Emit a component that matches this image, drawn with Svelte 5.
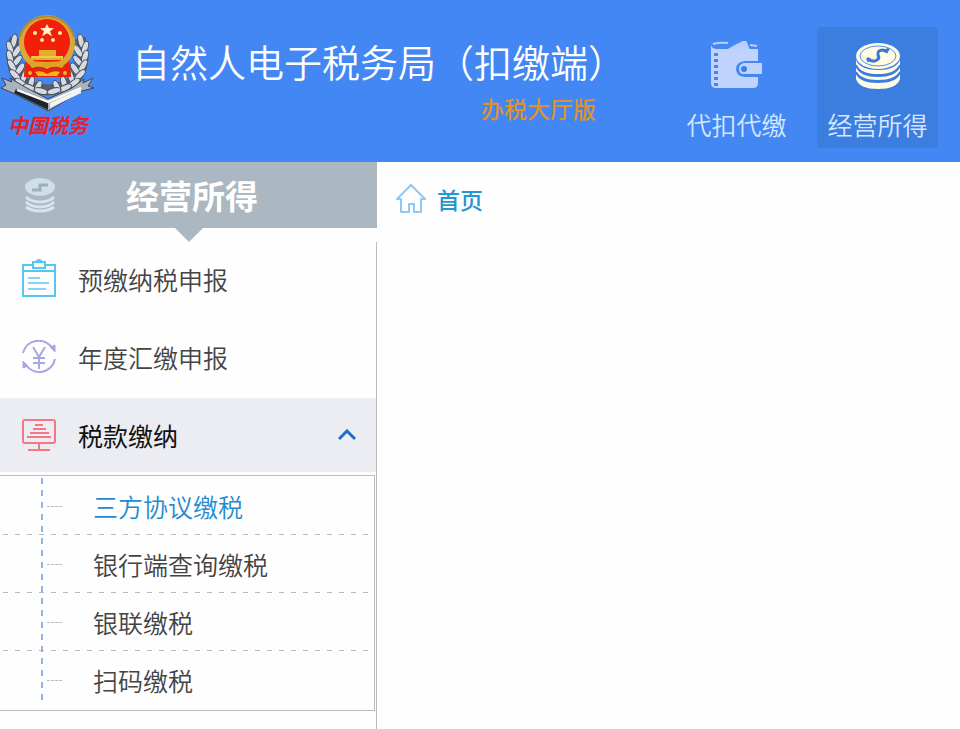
<script lang="ts">
  const title = '自然人电子税务局（扣缴端）';

  const modules = [
    { id: 'withhold', label: '代扣代缴' },
    { id: 'business', label: '经营所得' },
  ];

  const menu = [
    { id: 'prepay', label: '预缴纳税申报' },
    { id: 'annual', label: '年度汇缴申报' },
    { id: 'pay', label: '税款缴纳' },
  ];

  const payLinks = ['三方协议缴税', '银行端查询缴税', '银联缴税', '扫码缴税'];

  // Ears of the wreath, mirrored for the right side.
  const leaves = [
    [14, 41, 12], [10, 48, -18], [17, 51, 35], [10, 57, -15], [17, 61, 40],
    [12, 66, -30], [20, 69, 35], [15, 75, -45], [24, 77, 20], [21, 83, -55],
    [31, 83, 15], [30, 88, -65], [38, 87, 25], [41, 91, -75],
  ];

  let activeModule = $state('business');
  let activeLink = $state('三方协议缴税');
  let payOpen = $state(true);
</script>

<header>
  <div class="logo">
    <svg width="96" height="112" viewBox="0 0 96 112" aria-hidden="true">
      <defs>
        <g id="wreath">
          <path d="M15 38q-8 28 6 42 10 9 27 10" fill="none" stroke="#55606e" stroke-width="11" />
          {#each leaves as [x, y, angle]}
            <ellipse cx={x} cy={y} rx="3" ry="7" transform="rotate({angle} {x} {y})" fill="#d5dbe1" stroke="#46505d" stroke-width="1" />
          {/each}
        </g>
      </defs>
      <path d="M26 74h42l4 12-24 8-24-8z" fill="#4387f4" />
      <use href="#wreath" />
      <use href="#wreath" transform="translate(95 0) scale(-1 1)" />
      <path d="M2 78l10 4-2-4 15 9 23 12 24-11 12-9-1 4 10-5-5 8 6 2-12 3-34 20-33-17-14-6 5-3z" fill="#aab3bb" stroke="#3d4651" stroke-width="1" />
      <path d="M14 93l34 17v-7L16 89z" fill="#1f252d" />
      <path d="M50 103l31-14v4l-31 15z" fill="#f3f5f5" />
      <path d="M17 90l31 12 33-14" fill="none" stroke="#fff" stroke-width="2" />
      <path d="M26 58h43l2 19H24z" fill="#e5230f" />
      <circle cx="47" cy="43" r="28" fill="#d6a938" />
      <path d="M20 37a28 28 0 0 1 54 0" fill="none" stroke="#b9892f" stroke-width="2" />
      <path d="M25 64h45l1 13H24z" fill="#e5230f" />
      <circle cx="47" cy="42" r="23" fill="#f21f0b" />
      <path d="M47 24l2 4 5 .2-4 3 2 5-5-3-5 3 2-5-4-3 5-.2z" fill="#fff2c4" />
      <g fill="#ffe4a0">
        <circle cx="35" cy="33" r="2" />
        <circle cx="60" cy="33" r="2" />
        <circle cx="42" cy="40" r="2" />
        <circle cx="53" cy="40" r="2" />
      </g>
      <path d="M39 50h17v6h7v4H31v-4h8z" fill="#e0b02c" />
      <path d="M26 60q20 4 42 0l-6 8q-9-3-15 1-6-4-15-1z" fill="#dda527" />
      <path d="M32 57h31" stroke="#ffe46a" stroke-width="1" />
      <path d="M35 72q7-2 12 2 6-4 13-2l-3 4H38z" fill="#efb51b" />
      <circle cx="30" cy="73" r="2" fill="#efb51b" />
      <circle cx="65" cy="73" r="2" fill="#efb51b" />
    </svg>
    <span class="logo-text">中国税务</span>
  </div>
  <div class="brand">
    <h1>{title}</h1>
    <span class="edition">办税大厅版</span>
  </div>
  <nav class="modules">
    {#each modules as item}
      <button class:active={activeModule === item.id} onclick={() => (activeModule = item.id)}>
        {#if item.id === 'withhold'}
          <svg width="52" height="50" viewBox="0 0 52 50" aria-hidden="true">
            <path d="M2 3Q8 1 17 2M39 4l7 1" fill="none" stroke="#b9d0ff" stroke-width="2" />
            <path d="M15 9Q23 4 32 0l3-1 2 5 2 5z" fill="#b9d0ff" />
            <path d="M0 4q1 4 6 4h41v12H34q-9 1-9 8t9 8h13v6q0 5-5 5H5q-5 0-5-5z" fill="#c0d3ff" />
            <path d="M33 22h18v11H33q-5 0-5-5t5-6z" fill="#c0d3ff" />
            <circle cx="33" cy="28" r="3" fill="#397fe8" />
            <path d="M5 12v33" stroke="#4685e9" stroke-width="4" stroke-dasharray="3 3" />
          </svg>
        {:else}
          <svg width="46" height="50" viewBox="0 0 46 50" aria-hidden="true">
            <g fill="#fffbe5">
              <path d="M1 33q4 9 22 9t22-9v5q-3 10-22 10T1 38z" />
              <path d="M1 26q4 10 22 10t22-10v5q-4 9-22 9T1 31z" />
              <path d="M1 19q4 10 22 10t22-10v5q-4 10-22 10T1 24z" />
              <ellipse cx="23" cy="15" rx="22" ry="13" />
            </g>
            <ellipse cx="23" cy="15" rx="18" ry="10" fill="none" stroke="#5790e4" stroke-width="1" />
            <path d="M12 17q5 5 10 2 3-2 1-5-1-5 5-5l5 2M12 20l4-2M30 10l4-2" fill="none" stroke="#3979d5" stroke-width="3" />
            <path d="M1 24q4 10 22 10t22-10M1 31q4 9 22 9t22-9" fill="none" stroke="#3b7de0" stroke-width="2" />
          </svg>
        {/if}
        <span>{item.label}</span>
      </button>
    {/each}
  </nav>
</header>

<div class="layout">
  <aside>
    <div class="side-title">
      <svg width="32" height="36" viewBox="0 0 32 36" aria-hidden="true">
        <g fill="none" stroke="#d3e5f0" stroke-width="3">
          <path d="M2 20q5 5 14 5t14-5" />
          <path d="M2 25q5 5 14 5t14-5" />
          <path d="M2 30q5 4 14 4t14-4" />
        </g>
        <ellipse cx="16" cy="10" rx="15" ry="9" fill="#cfdee7" />
        <path d="M8 13h8V8h8" fill="none" stroke="#9cafb9" stroke-width="3" />
      </svg>
      <h2>经营所得</h2>
    </div>
    <nav class="menu">
      {#each menu as item}
        {#if item.id === 'pay'}
          <button class="menu-item open" aria-expanded={payOpen} onclick={() => (payOpen = !payOpen)}>
            <svg width="34" height="34" viewBox="0 0 34 34" aria-hidden="true" fill="none" stroke="#f47883" stroke-width="2">
              <rect x="1" y="2" width="32" height="23" rx="2" />
              <path d="M13 7h8M11 11h13M8 15h19M5 19h24M17 25v7M6 32h22" />
            </svg>
            <span>{item.label}</span>
            <svg class="arrow" class:closed={!payOpen} width="18" height="12" viewBox="0 0 18 12" aria-hidden="true">
              <path d="M1 10l8-8 8 8" fill="none" stroke="#216fc4" stroke-width="3" />
            </svg>
          </button>
        {:else}
          <button class="menu-item">
            {#if item.id === 'prepay'}
              <svg width="34" height="40" viewBox="0 0 34 40" aria-hidden="true" fill="none" stroke="#55c5f4" stroke-width="2">
                <path d="M10 6H1v31h32V6h-9M1 12h32" />
                <path d="M11 9V3h12v6zM14 3q3-4 6 0" fill="#fff" />
                <path d="M6 19h12M6 24h21M6 30h18" stroke="#83d5f8" />
              </svg>
            {:else}
              <svg width="34" height="34" viewBox="0 0 34 34" aria-hidden="true" fill="none" stroke="#aaa6e6" stroke-width="2">
                <path d="M1 13a16 16 0 0 1 29-5M33 19a16 16 0 0 1-29 6" />
                <path d="M33 5v7l-5-5zM1 28v-7l5 5z" fill="#aaa6e6" stroke-width="1" />
                <path d="M11 7l6 10 6-10M17 16v13M11 18h12M11 23h12" />
              </svg>
            {/if}
            <span>{item.label}</span>
          </button>
        {/if}
      {/each}
      {#if payOpen}
        <ul>
          {#each payLinks as link}
            <li>
              <a href="#pay" class:active={activeLink === link} onclick={() => (activeLink = link)}>{link}</a>
            </li>
          {/each}
        </ul>
      {/if}
    </nav>
  </aside>
  <main>
    <a class="crumb" href="#home">
      <svg width="30" height="30" viewBox="0 0 30 30" aria-hidden="true">
        <path d="M5 15H1L15 1l14 14h-4v13h-7v-8h-5v8H5z" fill="none" stroke="#8fc8f7" stroke-width="2" stroke-linejoin="round" />
      </svg>
      <span>首页</span>
    </a>
  </main>
</div>

<style>
  :global(body) {
    margin: 0;
    background: #fefefe;
    font-family: "Noto Sans CJK SC", sans-serif;
  }

  :global(#app) {
    display: flex;
    flex-direction: column;
    min-height: 100vh;
  }

  button {
    border: 0;
    background: none;
    font-family: inherit;
    cursor: pointer;
  }

  a {
    text-decoration: none;
  }

  svg {
    display: block;
    flex-shrink: 0;
  }

  header {
    display: flex;
    box-sizing: border-box;
    height: 162px;
    background: #4387f4;
  }

  .logo {
    display: flex;
    flex-direction: column;
    align-items: center;
    width: 96px;
  }

  .logo-text {
    color: #e8202c;
    font-size: 20px;
    font-style: italic;
    font-weight: 700;
    line-height: 26px;
  }

  .brand {
    display: flex;
    flex-direction: column;
    margin: 33px 0 0 36px;
    white-space: nowrap;
  }

  h1 {
    margin: 0;
    color: #fff;
    font-size: 38px;
    font-weight: 350;
    line-height: 56px;
  }

  .edition {
    align-self: flex-end;
    margin-right: 30px;
    color: #dc922d;
    font-size: 23px;
    font-weight: 500;
    line-height: 38px;
  }

  .modules {
    display: flex;
    gap: 20px;
    margin: 27px 22px 0 auto;
  }

  .modules button {
    display: flex;
    flex-direction: column;
    align-items: center;
    width: 121px;
    height: 121px;
    padding: 14px 0 0;
    border-radius: 4px;
    color: #d5e7ff;
    font-size: 25px;
    font-weight: 350;
    line-height: 36px;
    white-space: nowrap;
  }

  .modules button span {
    margin-top: 15px;
  }

  .modules .active {
    background: #3c7de0;
  }

  .layout {
    display: flex;
    flex: 1;
  }

  aside {
    display: flex;
    flex-direction: column;
    flex-shrink: 0;
    width: 377px;
  }

  .side-title {
    position: relative;
    display: flex;
    align-items: center;
    height: 66px;
    padding-left: 24px;
    background: #abb8c1;
  }

  .side-title::after {
    content: '';
    position: absolute;
    top: 100%;
    left: 50%;
    margin-left: -14px;
    border: 14px solid transparent;
    border-top-color: #abb8c1;
    border-bottom: 0;
  }

  h2 {
    margin: 0 0 0 70px;
    color: #fff;
    font-size: 33px;
    font-weight: 700;
    line-height: 48px;
  }

  .menu {
    flex: 1;
    margin-top: 14px;
    border-right: 1px solid #bbb;
  }

  .menu-item {
    display: flex;
    align-items: center;
    gap: 22px;
    width: 100%;
    height: 78px;
    padding: 0 20px 4px 22px;
    color: #444;
    font-size: 25px;
    font-weight: 350;
  }

  .open {
    height: 74px;
    margin-bottom: 3px;
    padding-bottom: 0;
    background: #ecedf2;
    color: #111;
    font-weight: 400;
  }

  .arrow {
    margin-left: auto;
  }

  .closed {
    transform: rotate(180deg);
  }

  ul {
    margin: 0 1px 0 0;
    padding: 1px 0;
    border: 1px solid #bbb;
    border-left: 0;
    list-style: none;
    background: repeating-linear-gradient(#8db5de 0 6px, transparent 6px 12px) 41px 2px / 2px 228px no-repeat;
  }

  li {
    display: flex;
    align-items: center;
    box-sizing: border-box;
    height: 58px;
    background: repeating-linear-gradient(90deg, transparent 0 3px, #b5b9bd 3px 8px, transparent 8px 12px) 0 100% / 369px 1px no-repeat;
  }

  li:last-child {
    background: none;
  }

  li::before {
    content: '';
    width: 15px;
    margin: 0 31px 0 47px;
    border-top: 1px dashed #bbb;
  }

  li a {
    color: #444;
    font-size: 25px;
    font-weight: 350;
  }

  li .active {
    color: #238bd2;
  }

  main {
    flex: 1;
  }

  .crumb {
    display: inline-flex;
    align-items: center;
    gap: 11px;
    height: 74px;
    margin-left: 19px;
    color: #2496d0;
    font-size: 23px;
    font-weight: 500;
  }
</style>
